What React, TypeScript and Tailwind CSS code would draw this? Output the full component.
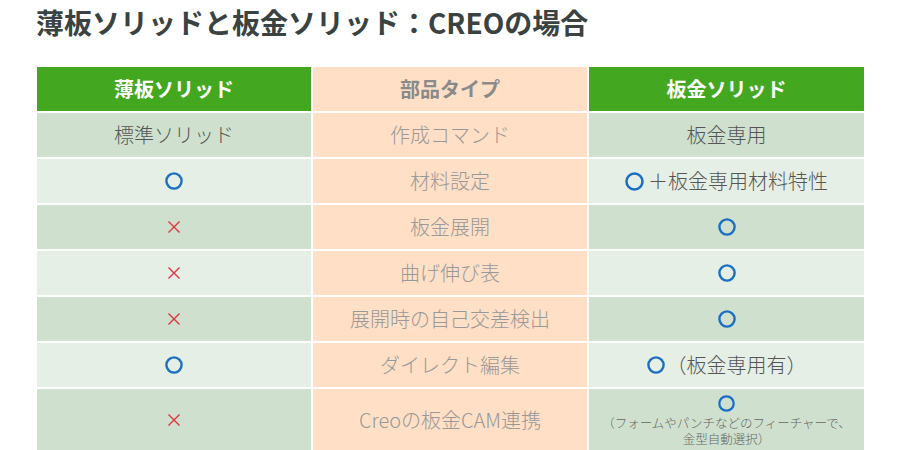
import React from "react";

const Circle = ({ size = 18 }: { size?: number }) => (
  <svg width={size} height={size} viewBox="0 0 18 18" className="inline-block">
    <circle cx="9" cy="9" r="7.6" fill="none" stroke="#1a6fc4" strokeWidth="2.4" />
  </svg>
);

const Cross = () => (
  <svg width="14" height="14" viewBox="0 0 14 14" className="inline-block">
    <path d="M1.5 1.5 L12.5 12.5 M12.5 1.5 L1.5 12.5" stroke="#e0323f" strokeWidth="1.4" fill="none" />
  </svg>
);

type Row = { a: React.ReactNode; b: string; c: React.ReactNode; dark: boolean; tall?: boolean };

const rows: Row[] = [
  { a: <span>標準ソリッド</span>, b: "作成コマンド", c: <span>板金専用</span>, dark: true },
  {
    a: <Circle />,
    b: "材料設定",
    c: (
      <span className="flex items-center gap-[2px]">
        <Circle size={19} />
        <span className="ml-[2px]">＋板金専用材料特性</span>
      </span>
    ),
    dark: false,
  },
  { a: <Cross />, b: "板金展開", c: <Circle />, dark: true },
  { a: <Cross />, b: "曲げ伸び表", c: <Circle />, dark: false },
  { a: <Cross />, b: "展開時の自己交差検出", c: <Circle />, dark: true },
  {
    a: <Circle />,
    b: "ダイレクト編集",
    c: (
      <span className="flex items-center">
        <Circle />
        <span className="ml-[2px]">（板金専用有）</span>
      </span>
    ),
    dark: false,
  },
  {
    a: <Cross />,
    b: "Creoの板金CAM連携",
    c: (
      <span className="flex flex-col items-center self-start pt-[6px]">
        <Circle size={17} />
        <span className="block text-[12.5px] leading-[16px] mt-[3px] text-center text-[#666]">
          （フォームやパンチなどのフィーチャーで、
        </span>
        <span className="block text-[12.5px] leading-[16px] text-center text-[#666]">金型自動選択）</span>
      </span>
    ),
    dark: true,
    tall: true,
  },
];

export default function App() {
  return (
    <div
      className="w-[900px] h-[450px] overflow-hidden bg-white"
      style={{ fontFamily: '"Noto Sans CJK JP", "Noto Sans", sans-serif' }}
    >
      <div className="pl-[36px] pt-[6px] h-[67px]">
        <h1 className="text-[28px] leading-[32px] font-bold text-[#3b4242]">
          薄板ソリッドと板金ソリッド：CREOの場合
        </h1>
      </div>
      <div className="ml-[37px] grid grid-cols-[274px_274px_275px] gap-x-[2px] gap-y-[2px] bg-white w-[827px]">
        <div className="h-[44px] bg-[#43a81f] flex items-center justify-center text-white font-bold text-[20px]">
          薄板ソリッド
        </div>
        <div className="h-[44px] bg-[#ffdfc5] flex items-center justify-center text-[#8a8a8a] font-bold text-[20px]">
          部品タイプ
        </div>
        <div className="h-[44px] bg-[#43a81f] flex items-center justify-center text-white font-bold text-[20px]">
          板金ソリッド
        </div>
        {rows.map((r, i) => {
          const bg = r.dark ? "bg-[#cfe1ce]" : "bg-[#e6efe5]";
          const h = r.tall ? "h-[61px]" : "h-[44px]";
          return (
            <React.Fragment key={i}>
              <div className={`${h} ${bg} flex items-center justify-center text-[#555] text-[20px] font-light`}>
                {r.a}
              </div>
              <div
                className={`${h} bg-[#ffdfc5] flex items-center justify-center text-[#999] text-[20px] font-light`}
              >
                {r.b}
              </div>
              <div className={`${h} ${bg} flex items-center justify-center text-[#555] text-[20px] font-light`}>
                {r.c}
              </div>
            </React.Fragment>
          );
        })}
      </div>
    </div>
  );
}
